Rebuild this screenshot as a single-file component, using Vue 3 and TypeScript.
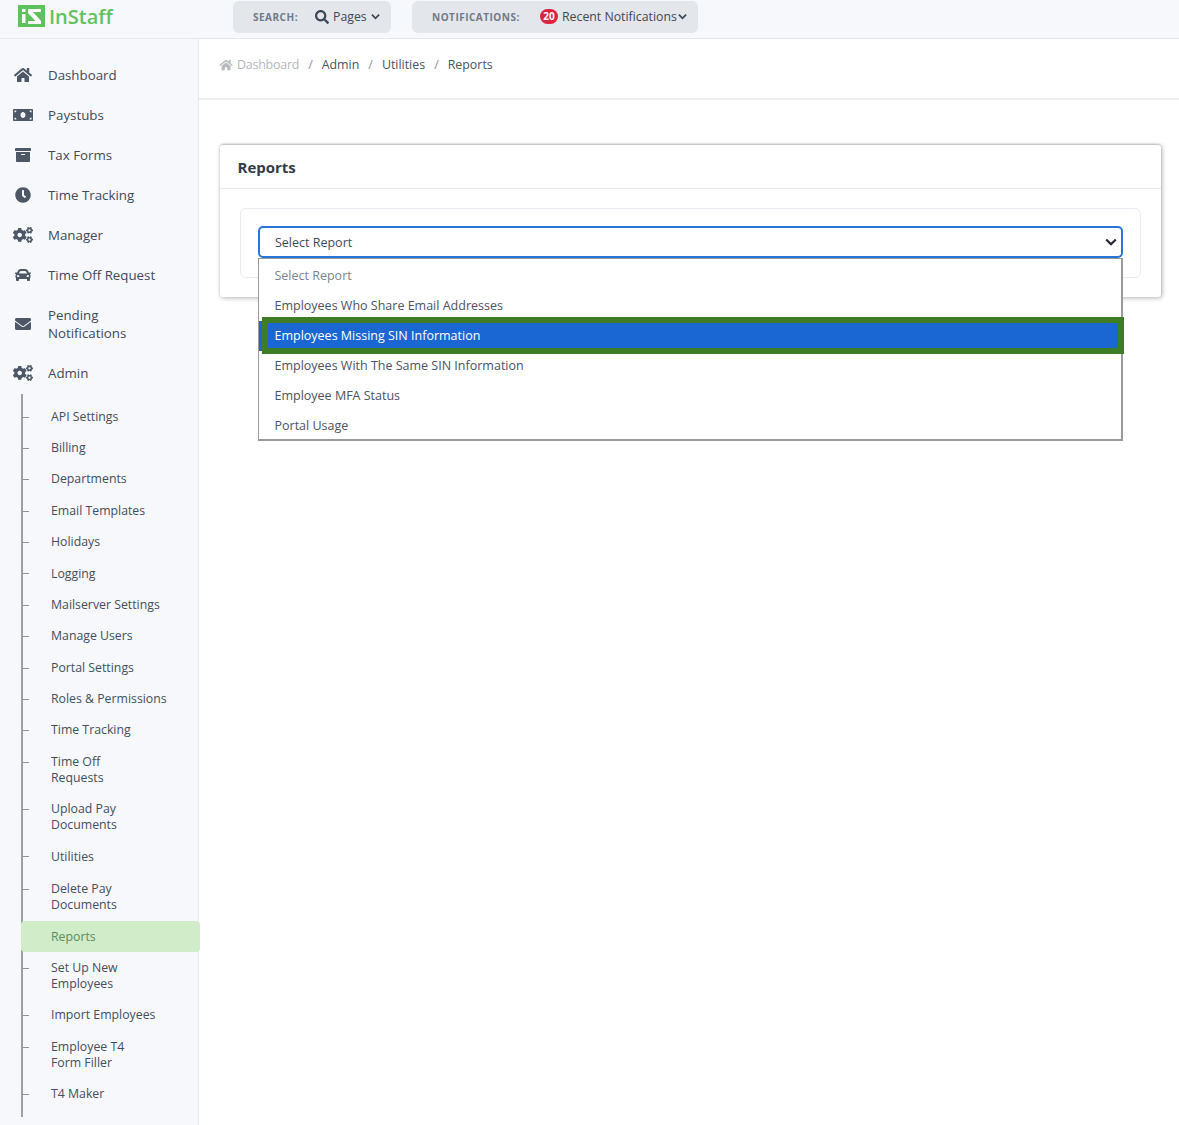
<script setup lang="ts">
interface MainItem { label: string[]; icon: string; vb: number }
const icons = {
  home: 'M280.37 148.26L96 300.11V464a16 16 0 0 0 16 16l112.06-.29a16 16 0 0 0 15.92-16V368a16 16 0 0 1 16-16h64a16 16 0 0 1 16 16v95.64a16 16 0 0 0 16 16.05L464 480a16 16 0 0 0 16-16V300L295.67 148.26a12.19 12.19 0 0 0-15.3 0zM571.6 251.47L488 182.56V44.05a12 12 0 0 0-12-12h-56a12 12 0 0 0-12 12v72.61L318.47 43a48 48 0 0 0-61 0L4.34 251.47a12 12 0 0 0-1.6 16.9l25.5 31A12 12 0 0 0 45.15 301l235.22-193.74a12.19 12.19 0 0 1 15.3 0L530.9 301a12 12 0 0 0 16.9-1.6l25.5-31a12 12 0 0 0-1.7-16.93z',
  money: 'M608 64H32C14.33 64 0 78.33 0 96v320c0 17.67 14.33 32 32 32h576c17.67 0 32-14.33 32-32V96c0-17.67-14.33-32-32-32zM48 400v-64c35.35 0 64 28.65 64 64H48zm0-224v-64h64c0 35.35-28.65 64-64 64zm272 176c-44.19 0-80-42.99-80-96 0-53.02 35.82-96 80-96s80 42.98 80 96c0 53.03-35.83 96-80 96zm272 48h-64c0-35.35 28.65-64 64-64v64zm0-224c-35.35 0-64-28.65-64-64h64v64z',
  archive: 'M32 448c0 17.7 14.3 32 32 32h384c17.7 0 32-14.3 32-32V160H32v288zm160-212c0-6.6 5.4-12 12-12h104c6.6 0 12 5.4 12 12v8c0 6.6-5.4 12-12 12H204c-6.6 0-12-5.4-12-12v-8zM480 32H32C14.3 32 0 46.3 0 64v48c0 8.8 7.2 16 16 16h480c8.8 0 16-7.2 16-16V64c0-17.7-14.3-32-32-32z',
  clock: 'M256,8C119,8,8,119,8,256S119,504,256,504,504,393,504,256,393,8,256,8Zm92.49,313h0l-20,25a16,16,0,0,1-22.49,2.5h0l-67-49.72a40,40,0,0,1-15-31.23V112a16,16,0,0,1,16-16h32a16,16,0,0,1,16,16V256l58,42.5A16,16,0,0,1,348.49,321Z',
  cogs: 'M512.1 191l-8.2 14.3c-3 5.3-9.4 7.5-15.1 5.4-11.8-4.4-22.6-10.7-32.1-18.6-4.6-3.8-5.8-10.5-2.8-15.7l8.2-14.3c-6.9-8-12.3-17.3-15.9-27.4h-16.5c-6 0-11.2-4.3-12.2-10.3-2-12-2.1-24.6 0-37.1 1-6 6.2-10.4 12.2-10.4h16.5c3.6-10.1 9-19.4 15.9-27.4l-8.2-14.3c-3-5.2-1.9-11.9 2.8-15.7 9.5-7.9 20.4-14.2 32.1-18.6 5.7-2.1 12.1.1 15.1 5.4l8.2 14.3c10.5-1.9 21.2-1.9 31.7 0L552 6.3c3-5.3 9.4-7.5 15.1-5.4 11.8 4.4 22.6 10.7 32.1 18.6 4.6 3.8 5.8 10.5 2.8 15.7l-8.2 14.3c6.9 8 12.3 17.3 15.9 27.4h16.5c6 0 11.2 4.3 12.2 10.3 2 12 2.1 24.6 0 37.1-1 6-6.2 10.4-12.2 10.4h-16.5c-3.6 10.1-9 19.4-15.9 27.4l8.2 14.3c3 5.2 1.9 11.9-2.8 15.7-9.5 7.9-20.4 14.2-32.1 18.6-5.7 2.1-12.1-.1-15.1-5.4l-8.2-14.3c-10.4 1.9-21.2 1.9-31.7 0zm-10.5-58.8c38.5 29.6 82.4-14.3 52.8-52.8-38.5-29.7-82.4 14.3-52.8 52.8zM386.3 286.1l33.7 16.8c10.1 5.8 14.5 18.1 10.5 29.1-8.9 24.2-26.4 46.4-42.6 65.8-7.4 8.9-20.2 11.1-30.3 5.3l-29.1-16.8c-16 13.7-34.6 24.6-54.9 31.7v33.6c0 11.6-8.3 21.6-19.7 23.6-24.6 4.2-50.4 4.4-75.9 0-11.5-2-20-11.9-20-23.6V418c-20.3-7.2-38.9-18-54.9-31.7L74 403c-10 5.8-22.9 3.6-30.3-5.3-16.2-19.4-33.3-41.6-42.2-65.7-4-10.9.4-23.2 10.5-29.1l33.3-16.8c-3.9-20.9-3.9-42.4 0-63.4L12 205.8c-10.1-5.8-14.6-18.1-10.5-29 8.9-24.2 26-46.4 42.2-65.8 7.4-8.9 20.2-11.1 30.3-5.3l29.1 16.8c16-13.7 34.6-24.6 54.9-31.7V57.1c0-11.5 8.2-21.5 19.6-23.5 24.6-4.2 50.5-4.4 76-.1 11.5 2 20 11.9 20 23.6v33.6c20.3 7.2 38.9 18 54.9 31.7l29.1-16.8c10-5.8 22.9-3.6 30.3 5.3 16.2 19.4 33.2 41.6 42.1 65.8 4 10.9.1 23.2-10 29.1l-33.7 16.8c3.9 21 3.9 42.5 0 63.5zm-117.6 21.1c59.2-77-28.7-164.9-105.7-105.7-59.2 77 28.7 164.9 105.7 105.7zm243.4 182.7l-8.2 14.3c-3 5.3-9.4 7.5-15.1 5.4-11.8-4.4-22.6-10.7-32.1-18.6-4.6-3.8-5.8-10.5-2.8-15.7l8.2-14.3c-6.9-8-12.3-17.3-15.9-27.4h-16.5c-6 0-11.2-4.3-12.2-10.3-2-12-2.1-24.6 0-37.1 1-6 6.2-10.4 12.2-10.4h16.5c3.6-10.1 9-19.4 15.9-27.4l-8.2-14.3c-3-5.2-1.9-11.9 2.8-15.7 9.5-7.9 20.4-14.2 32.1-18.6 5.7-2.1 12.1.1 15.1 5.4l8.2 14.3c10.5-1.9 21.2-1.9 31.7 0l8.2-14.3c3-5.3 9.4-7.5 15.1-5.4 11.8 4.4 22.6 10.7 32.1 18.6 4.6 3.8 5.8 10.5 2.8 15.7l-8.2 14.3c6.9 8 12.3 17.3 15.9 27.4h16.5c6 0 11.2 4.3 12.2 10.3 2 12 2.1 24.6 0 37.1-1 6-6.2 10.4-12.2 10.4h-16.5c-3.6 10.1-9 19.4-15.9 27.4l8.2 14.3c3 5.2 1.9 11.9-2.8 15.7-9.5 7.9-20.4 14.2-32.1 18.6-5.7 2.1-12.1-.1-15.1-5.4l-8.2-14.3c-10.4 1.9-21.2 1.9-31.7 0zM501.6 431c38.5 29.6 82.4-14.3 52.8-52.8-38.5-29.6-82.4 14.3-52.8 52.8z',
  car: 'M499.99 176h-59.87l-16.64-41.6C406.38 91.63 365.57 64 319.5 64h-127c-46.06 0-86.88 27.63-103.99 70.4L71.87 176H12.01C4.2 176-1.53 183.34.37 190.91l6 24C7.7 220.25 12.5 224 18.01 224h20.07C24.65 235.73 16 252.78 16 272v48c0 16.12 6.16 30.67 16 41.93V416c0 17.67 14.33 32 32 32h32c17.67 0 32-14.33 32-32v-32h256v32c0 17.67 14.33 32 32 32h32c17.67 0 32-14.33 32-32v-54.07c9.84-11.25 16-25.8 16-41.93v-48c0-19.22-8.65-36.27-22.07-48H494c5.51 0 10.31-3.75 11.64-9.09l6-24c1.89-7.57-3.84-14.91-11.65-14.91zm-352.06-17.83c7.29-18.22 24.94-30.17 44.57-30.17h127c19.63 0 37.28 11.95 44.57 30.17L384 208H128l19.93-49.83zM96 319.8c-19.2 0-32-12.76-32-31.9S76.8 256 96 256s48 28.71 48 47.85-28.8 15.95-48 15.95zm320 0c-19.2 0-48 3.19-48-15.95S396.8 256 416 256s32 12.76 32 31.9-12.8 31.9-32 31.9z',
  envelope: 'M502.3 190.8c3.9-3.1 9.7-.2 9.7 4.7V400c0 26.5-21.5 48-48 48H48c-26.5 0-48-21.5-48-48V195.6c0-5 5.7-7.8 9.7-4.7 22.4 17.4 52.1 39.5 154.1 113.6 21.1 15.4 56.7 47.8 92.2 47.6 35.7.3 72-32.8 92.3-47.6 102-74.1 131.6-96.3 154-113.7zM256 320c23.2.4 56.6-29.2 73.4-41.4 132.7-96.3 142.8-104.7 173.4-128.7 5.8-4.5 9.2-11.5 9.2-18.9v-19c0-26.5-21.5-48-48-48H48C21.5 64 0 85.5 0 112v19c0 7.4 3.4 14.3 9.2 18.9 30.6 23.9 40.7 32.4 173.4 128.7 16.8 12.2 50.2 41.8 73.4 41.4z',
  search: 'M505 442.7L405.3 343c-4.5-4.5-10.6-7-17-7H372c27.6-35.3 44-79.7 44-128C416 93.1 322.9 0 208 0S0 93.1 0 208s93.1 208 208 208c48.3 0 92.7-16.4 128-44v16.3c0 6.4 2.5 12.5 7 17l99.7 99.7c9.4 9.4 24.6 9.4 33.9 0l28.3-28.3c9.4-9.4 9.4-24.6.1-34zM208 336c-70.7 0-128-57.2-128-128 0-70.7 57.2-128 128-128 70.7 0 128 57.2 128 128 0 70.7-57.2 128-128 128z',
}
const mainItems: MainItem[] = [
  { label: ['Dashboard'], icon: icons.home, vb: 576 },
  { label: ['Paystubs'], icon: icons.money, vb: 640 },
  { label: ['Tax Forms'], icon: icons.archive, vb: 512 },
  { label: ['Time Tracking'], icon: icons.clock, vb: 512 },
  { label: ['Manager'], icon: icons.cogs, vb: 640 },
  { label: ['Time Off Request'], icon: icons.car, vb: 512 },
  { label: ['Pending', 'Notifications'], icon: icons.envelope, vb: 512 },
  { label: ['Admin'], icon: icons.cogs, vb: 640 },
]
const subItems: string[][] = [
  ['API Settings'], ['Billing'], ['Departments'], ['Email Templates'], ['Holidays'], ['Logging'],
  ['Mailserver Settings'], ['Manage Users'], ['Portal Settings'], ['Roles & Permissions'], ['Time Tracking'],
  ['Time Off', 'Requests'], ['Upload Pay', 'Documents'], ['Utilities'], ['Delete Pay', 'Documents'], ['Reports'],
  ['Set Up New', 'Employees'], ['Import Employees'], ['Employee T4', 'Form Filler'], ['T4 Maker'],
]
const options = [
  'Select Report',
  'Employees Who Share Email Addresses',
  'Employees Missing SIN Information',
  'Employees With The Same SIN Information',
  'Employee MFA Status',
  'Portal Usage',
]
const crumbs = ['Admin', 'Utilities', 'Reports']
const homePath = icons.home
const searchPath = icons.search
</script>

<template>
  <div class="page">
    <header class="topbar">
      <div class="logo">
        <svg class="logo-mark" viewBox="0 0 27 22" width="27" height="22">
          <rect width="27" height="22" fill="#5cc25a" />
          <rect x="4" y="9" width="3.5" height="9" fill="#fff" />
          <rect x="4" y="4" width="3.5" height="3" fill="#fff" />
          <path d="M10 4h13v3h-8l8 9v3H10v-3h7.5L10 8z" fill="#fff" />
        </svg>
        <span class="logo-text">InStaff</span>
      </div>
      <div class="pill pill-search">
        <span class="pill-label">SEARCH:</span>
        <svg class="search-icon" viewBox="0 0 512 512" width="14" height="14"><path :d="searchPath" /></svg>
        <span class="pill-value">Pages</span>
        <svg class="chev" viewBox="0 0 10 7" width="9" height="7"><path d="M1 1.5l4 4 4-4" /></svg>
      </div>
      <div class="pill pill-notify">
        <span class="pill-label">NOTIFICATIONS:</span>
        <span class="badge">20</span>
        <span class="pill-value pill-value-long">Recent Notifications</span>
        <svg class="chev chev-tight" viewBox="0 0 10 7" width="9" height="7"><path d="M1 1.5l4 4 4-4" /></svg>
      </div>
    </header>

    <div class="body">
      <aside class="sidebar">
        <nav class="main-nav">
          <a v-for="item in mainItems" :key="item.label.join()" class="main-item">
            <span class="main-icon">
              <svg :viewBox="`0 0 ${item.vb} 512`" width="20" height="16"><path :d="item.icon" /></svg>
            </span>
            <span class="main-label"><span v-for="l in item.label" :key="l" class="line">{{ l }}</span></span>
          </a>
        </nav>
        <ul class="sub-nav">
          <li v-for="item in subItems" :key="item.join()" class="sub-item" :class="{ active: item[0] === 'Reports' }">
            <span v-for="l in item" :key="l" class="line">{{ l }}</span>
          </li>
        </ul>
      </aside>

      <main class="content">
        <div class="breadcrumb">
          <svg class="crumb-home" viewBox="0 0 576 512" width="14" height="12"><path :d="homePath" /></svg>
          <span class="crumb-muted">Dashboard</span>
          <template v-for="c in crumbs" :key="c">
            <span class="crumb-sep">/</span>
            <span class="crumb">{{ c }}</span>
          </template>
        </div>

        <section class="card">
          <h2 class="card-title">Reports</h2>
          <div class="card-body">
            <div class="inner">
              <div class="select-wrap">
                <div class="select">
                  <span>Select Report</span>
                  <svg class="select-chev" viewBox="0 0 12 8" width="12" height="8"><path d="M1.2 1.5L6 6.2l4.8-4.7" /></svg>
                </div>
                <div class="dropdown">
                  <div
                    v-for="(o, i) in options"
                    :key="o"
                    class="option"
                    :class="{ muted: i === 0, selected: i === 2 }"
                  >{{ o }}</div>
                </div>
              </div>
            </div>
          </div>
        </section>
      </main>
    </div>
  </div>
</template>

<style>
html, body { margin: 0; background: #fff; }
</style>

<style scoped>
.page {
  width: 1179px;
  height: 1125px;
  overflow: hidden;
  font-family: "Open Sans", "Liberation Sans", sans-serif;
  color: #3f4a59;
  background: #fff;
}
.topbar {
  height: 38px;
  background: #f7f8fb;
  border-bottom: 1px solid #e4e7ee;
  display: flex;
  align-items: flex-start;
  box-sizing: content-box;
}
.logo {
  width: 233px;
  padding: 5px 0 0 18px;
  box-sizing: border-box;
  display: flex;
  align-items: center;
  gap: 4px;
  height: 27px;
}
.logo-mark { display: block; flex: none; }
.logo-text {
  font-size: 20px;
  font-weight: 600;
  color: #62c25f;
  line-height: 22px;
  padding-top: 2px;
}
.pill {
  margin-top: 1px;
  height: 32px;
  background: #e3e6eb;
  border-radius: 6px;
  display: flex;
  align-items: center;
  box-sizing: border-box;
  padding-left: 20px;
  padding-bottom: 1px;
}
.pill-search { width: 158px; }
.pill-notify { width: 286px; margin-left: 21px; }
.pill-label {
  font-size: 10px;
  font-weight: 700;
  letter-spacing: 0.5px;
  color: #6f7a88;
}
.pill-search .pill-label { width: 62px; }
.pill-notify .pill-label { width: 108px; }
.pill-value {
  font-size: 12.3px;
  color: #3d4855;
  white-space: nowrap;
}
.search-icon { fill: #3d4855; margin-right: 4px; flex: none; }
.chev { fill: none; stroke: #3d4855; stroke-width: 2; margin-left: 4px; flex: none; }
.chev-tight { margin-left: 1px; }
.badge {
  width: 18px;
  height: 15px;
  border-radius: 8px;
  background: #dc2340;
  color: #fff;
  font-size: 10px;
  font-weight: 700;
  line-height: 15px;
  text-align: center;
  margin-right: 4px;
  flex: none;
}
.body { display: flex; height: 1086px; }
.sidebar {
  width: 199px;
  flex: none;
  box-sizing: border-box;
  background: #f7f8fb;
  border-right: 1px solid #e6e9f0;
  padding-top: 16px;
  position: relative;
  height: 1086px;
}
.main-nav { display: flex; flex-direction: column; }
.main-item {
  display: flex;
  align-items: center;
  padding: 11px 0;
  font-size: 13.3px;
  line-height: 18px;
  color: #3f4a59;
}
.main-icon {
  width: 48px;
  flex: none;
  display: flex;
  justify-content: center;
  padding-right: 3px;
  box-sizing: border-box;
}
.main-icon svg { fill: #4d5765; display: block; }
.line { display: block; }
.sub-nav {
  list-style: none;
  margin: 1px 0 0 21px;
  padding: 7px 0 0;
  border-left: 2px solid #9b9ea3;
  height: 716px;
  box-sizing: content-box;
}
.sub-item {
  position: relative;
  padding: 7.7px 0 7.7px 30px;
  margin-left: -2px;
  font-size: 12.3px;
  line-height: 16px;
  color: #444e5b;
}
.sub-item:nth-child(15) { margin-top: 1.3px; }
.sub-item::before {
  content: "";
  position: absolute;
  left: 2px;
  top: 15.5px;
  width: 6px;
  height: 1px;
  background: #8f9297;
}
.sub-item.active {
  background: #d0ecc8;
  color: #5e8a66;
  border-radius: 4px;
  width: 179px;
  box-sizing: border-box;
  z-index: 1;
}
.sub-item.active::before { display: none; }
.content { flex: 1; min-width: 0; }
.breadcrumb {
  height: 61px;
  box-sizing: border-box;
  border-bottom: 2px solid #eceef2;
  padding: 17px 0 0 20px;
  display: flex;
  align-items: flex-start;
  font-size: 12.4px;
  line-height: 18px;
}
.crumb-home { fill: #b8bcc2; margin: 3px 4px 0 0; flex: none; }
.crumb-muted { color: #b3b7bd; letter-spacing: -0.2px; }
.crumb-sep { color: #8b929b; margin: 0 9px; }
.crumb { color: #4a5462; }
.card {
  margin: 45px 0 0 21px;
  width: 941px;
  height: 152px;
  box-sizing: border-box;
  background: #fff;
  border-radius: 3px;
  box-shadow: 1px 1px 5px rgba(0, 0, 0, 0.3), 0 -1px 2px rgba(0, 0, 0, 0.2);
}
.card-title {
  margin: 0;
  height: 44px;
  box-sizing: border-box;
  padding: 0 0 0 17.5px;
  border-bottom: 1px solid #e6e9ef;
  font-size: 15px;
  font-weight: 700;
  line-height: 44px;
  color: #333c48;
}
.card-body { padding: 19px 20px 0; }
.inner {
  height: 70px;
  box-sizing: border-box;
  border: 1px solid #e8ebf0;
  border-radius: 6px;
  padding: 17px 17px 0;
}
.select-wrap { position: relative; }
.select {
  height: 32px;
  box-sizing: border-box;
  border: 2px solid #2a76d8;
  border-radius: 5px;
  background: #fff;
  display: flex;
  align-items: center;
  justify-content: space-between;
  padding: 0 4px 0 15px;
  font-size: 12.5px;
  color: #3f4a59;
}
.select-chev { fill: none; stroke: #23272e; stroke-width: 2.2; }
.dropdown {
  position: absolute;
  left: 0;
  right: 0;
  top: 32px;
  box-sizing: border-box;
  height: 183px;
  background: #fff;
  border: 1px solid #9a9a9a;
  border-width: 1px 2px 2px 1px;
  padding-top: 2px;
  z-index: 2;
}
.option {
  height: 30px;
  line-height: 30px;
  padding-left: 15.5px;
  font-size: 12.5px;
  color: #4a5361;
  position: relative;
}
.option.muted { color: #7b838e; }
.option.selected { background: #1a66d2; color: #fff; }
.option.selected::after {
  content: "";
  position: absolute;
  left: 3px;
  right: -3px;
  top: -4px;
  height: 37px;
  box-sizing: border-box;
  border: 6px solid #3f7d24;
}
</style>
